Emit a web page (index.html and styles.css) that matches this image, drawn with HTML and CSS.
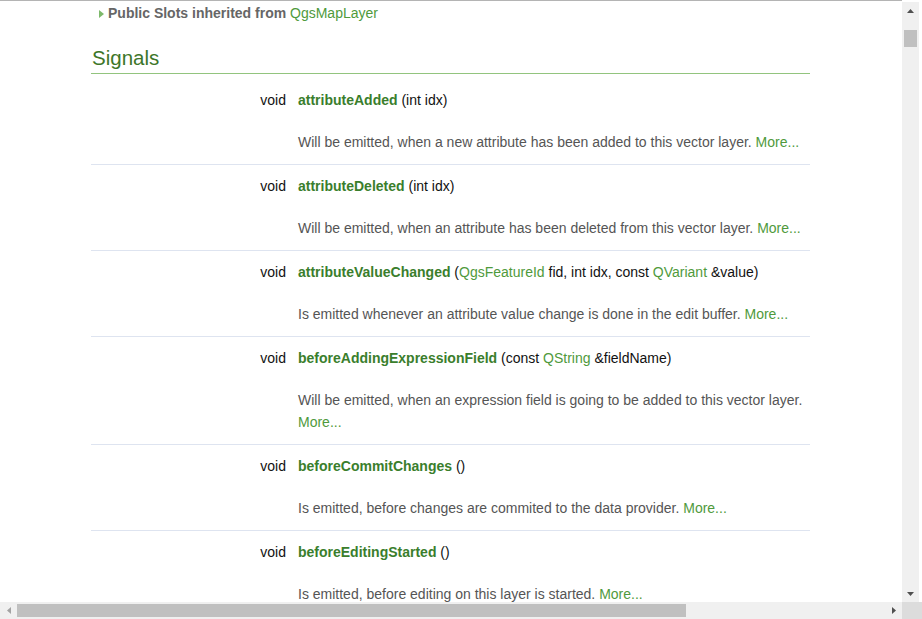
FILE: index.html
```html
<!DOCTYPE html>
<html>
<head>
<meta charset="utf-8">
<title>QgsVectorLayer Signals</title>
<link rel="stylesheet" href="styles.css">
</head>
<body>
<div class="window">
  <div class="main">
    <div class="viewport">
      <div class="content">
        <div class="inherit">
          <svg class="inherit-arrow" width="5" height="8" viewBox="0 0 5 8"><polygon points="0,0 5,4 0,8" fill="#7db96b"/></svg><span class="inherit-label">Public Slots inherited from </span><a class="link">QgsMapLayer</a>
        </div>
        <h2 class="group-header">Signals</h2>
        <div class="members">
          <div class="member">
            <div class="member-type">void</div>
            <div class="member-sig"><a class="member-name">attributeAdded</a> (int idx)</div>
            <div class="member-desc">Will be emitted, when a new attribute has been added to this vector layer. <a class="link">More...</a></div>
          </div>
          <div class="member">
            <div class="member-type">void</div>
            <div class="member-sig"><a class="member-name">attributeDeleted</a> (int idx)</div>
            <div class="member-desc">Will be emitted, when an attribute has been deleted from this vector layer. <a class="link">More...</a></div>
          </div>
          <div class="member">
            <div class="member-type">void</div>
            <div class="member-sig"><a class="member-name">attributeValueChanged</a> (<a class="link">QgsFeatureId</a> fid, int idx, const <a class="link">QVariant</a> &amp;value)</div>
            <div class="member-desc">Is emitted whenever an attribute value change is done in the edit buffer. <a class="link">More...</a></div>
          </div>
          <div class="member">
            <div class="member-type">void</div>
            <div class="member-sig"><a class="member-name">beforeAddingExpressionField</a> (const <a class="link">QString</a> &amp;fieldName)</div>
            <div class="member-desc">Will be emitted, when an expression field is going to be added to this vector layer. <a class="link">More...</a></div>
          </div>
          <div class="member">
            <div class="member-type">void</div>
            <div class="member-sig"><a class="member-name">beforeCommitChanges</a> ()</div>
            <div class="member-desc">Is emitted, before changes are commited to the data provider. <a class="link">More...</a></div>
          </div>
          <div class="member">
            <div class="member-type">void</div>
            <div class="member-sig"><a class="member-name">beforeEditingStarted</a> ()</div>
            <div class="member-desc">Is emitted, before editing on this layer is started. <a class="link">More...</a></div>
          </div>
        </div>
      </div>
    </div>
    <div class="vscroll">
      <div class="sb-btn"><svg width="7" height="4" viewBox="0 0 7 4"><polygon points="0,4 3.5,0 7,4" fill="#505050"/></svg></div>
      <div class="vtrack"><div class="vthumb"></div></div>
      <div class="sb-btn"><svg width="7" height="4" viewBox="0 0 7 4"><polygon points="0,0 3.5,4 7,0" fill="#505050"/></svg></div>
    </div>
    <div class="edge"></div>
  </div>
  <div class="hscroll">
    <div class="sb-btn"><svg width="4" height="7" viewBox="0 0 4 7"><polygon points="4,0 0,3.5 4,7" fill="#a3a3a3"/></svg></div>
    <div class="htrack"><div class="hthumb"></div></div>
    <div class="sb-btn"><svg width="4" height="7" viewBox="0 0 4 7"><polygon points="0,0 4,3.5 0,7" fill="#505050"/></svg></div>
    <div class="corner"></div>
  </div>
</div>
</body>
</html>
```

FILE: styles.css
```css
html, body {
  margin: 0;
  padding: 0;
  background: #ffffff;
}

body {
  font-family: "Liberation Sans", Arial, sans-serif;
  font-size: 14px;
  line-height: 22px;
  color: #111111;
}

.window {
  width: 922px;
  height: 619px;
  display: flex;
  flex-direction: column;
  overflow: hidden;
}

.main {
  display: flex;
  height: 602px;
}

.viewport {
  width: 902px;
  height: 602px;
  box-sizing: border-box;
  border-top: 1px solid #b4b4b4;
  overflow: hidden;
  flex: none;
}

.content {
  padding: 1px 0 0 91px;
}

.inherit {
  padding-left: 8px;
  font-weight: bold;
  color: #666666;
}

.inherit-arrow {
  margin-right: 4px;
}

.inherit-label {
  color: #666666;
}

.inherit .link {
  font-weight: normal;
}

.link {
  color: #4f9a3c;
  text-decoration: none;
}

.group-header {
  margin: 22px 0 5px 0;
  width: 719px;
  font-size: 20.5px;
  line-height: 24px;
  font-weight: normal;
  color: #3d7629;
  padding: 0 0 3px 1px;
  box-sizing: border-box;
  border-bottom: 1px solid #92c47e;
}

.members {
  width: 719px;
}

.member {
  display: grid;
  grid-template-columns: 195px 512px;
  column-gap: 12px;
  row-gap: 20px;
  padding: 10px 0 11px 0;
  border-bottom: 1px solid #dee4f0;
}

.member-type {
  text-align: right;
}

.member-sig {
  white-space: nowrap;
}

.member-name {
  font-weight: bold;
  color: #3a7e2c;
  text-decoration: none;
}

.member-desc {
  grid-column: 2;
  color: #555555;
}

/* scrollbars */
.vscroll {
  width: 17px;
  margin-top: 2px;
  height: 600px;
  background: #f0f0f0;
  display: flex;
  flex-direction: column;
  flex: none;
}

.edge {
  width: 3px;
  flex: none;
  background: #ffffff;
}

.sb-btn {
  width: 17px;
  height: 17px;
  display: flex;
  align-items: center;
  justify-content: center;
  flex: none;
}

.vtrack {
  flex: 1;
  padding: 11px 2px 0 2px;
}

.vthumb {
  height: 17px;
  background: #c0c0c0;
}

.hscroll {
  display: flex;
  height: 17px;
  background: #f0f0f0;
}

.htrack {
  width: 868px;
  padding: 2px 0;
  box-sizing: border-box;
}

.hthumb {
  width: 669px;
  height: 13px;
  background: #c0c0c0;
}

.corner {
  width: 20px;
  background: #dcdcdc;
}
```
